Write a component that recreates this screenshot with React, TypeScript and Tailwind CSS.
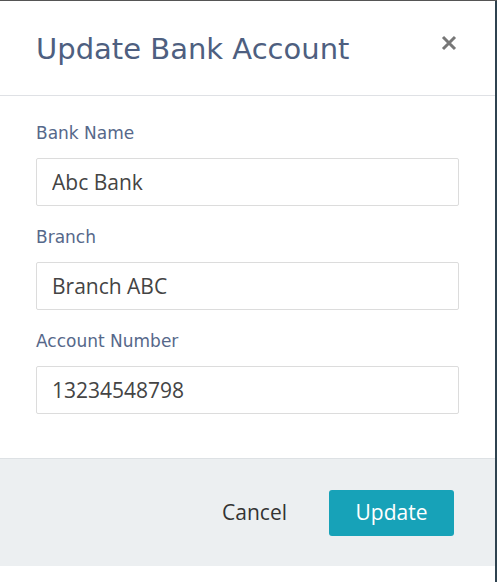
import { useState } from 'react';

type FieldProps = {
    label: string;
    value: string;
    onChange: (v: string) => void;
};

const Field = ({ label, value, onChange }: FieldProps) => (
    <div>
        <label className="block text-[17px] leading-[22px] text-[#56688a] font-['DejaVu_Sans',sans-serif] mb-[14px]">
            {label}
        </label>
        <input
            value={value}
            onChange={(e) => onChange(e.target.value)}
            className="block w-full h-[48px] px-[15px] border border-[#dcdcdc] rounded-[2px] text-[21px] text-[#444] font-['Open_Sans',sans-serif] outline-none"
        />
    </div>
);

export default function App() {
    const [bank, setBank] = useState('Abc Bank');
    const [branch, setBranch] = useState('Branch ABC');
    const [account, setAccount] = useState('13234548798');

    return (
        <div className="w-[497px] h-[582px] bg-white border-t border-[#555] flex">
            <div className="w-[495px] flex flex-col">
                <div className="h-[95px] flex items-start justify-between border-b border-[#dfe1e5] pl-[36px] pr-[38px]">
                    <h2 className="mt-[29px] text-[29px] leading-[38px] text-[#4e5f80] font-['DejaVu_Sans',sans-serif] font-normal">
                        Update Bank Account
                    </h2>
                    <button className="mt-[34px] text-[#777]" aria-label="Close">
                        <svg width="16" height="16" viewBox="0 0 16 16">
                            <path d="M2 2 L14 14 M14 2 L2 14" stroke="currentColor" strokeWidth="3" />
                        </svg>
                    </button>
                </div>
                <div className="px-[36px] pt-[26px] pb-[44px] flex flex-col gap-[20px]">
                    <Field label="Bank Name" value={bank} onChange={setBank} />
                    <Field label="Branch" value={branch} onChange={setBranch} />
                    <Field label="Account Number" value={account} onChange={setAccount} />
                </div>
                <div className="h-[108px] bg-[#eceff1] border-t border-[#dde1e4] flex items-center justify-end pr-[41px] gap-[42px] font-['Open_Sans',sans-serif]">
                    <button className="text-[21px] text-[#333]">Cancel</button>
                    <button className="w-[125px] h-[46px] rounded-[3px] bg-[#17a2b8] text-white text-[21px]">
                        Update
                    </button>
                </div>
            </div>
            <div className="flex-1 bg-[#2f4350]" />
        </div>
    );
}
